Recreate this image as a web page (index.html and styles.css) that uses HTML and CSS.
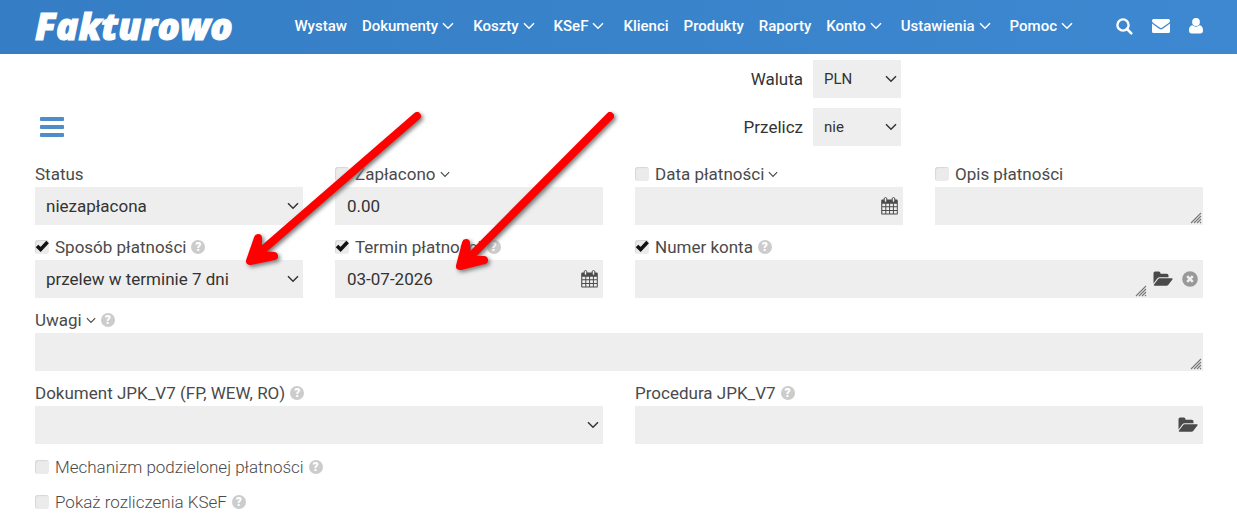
FILE: index.html
```html
<!DOCTYPE html>
<html lang="pl">
<head>
<meta charset="utf-8">
<title>Fakturowo</title>
<link rel="stylesheet" href="styles.css">
</head>
<body>
<svg class="sprite" aria-hidden="true">
  <symbol id="chev" viewBox="0 0 12 8"><path d="M1 1.2 6 6.2l5-5" fill="none" stroke="currentColor" stroke-width="1.5"/></symbol>
  <symbol id="chev-thin" viewBox="0 0 12 8"><path d="M1 1.2 6 6.2l5-5" fill="none" stroke="currentColor" stroke-width="1.4"/></symbol>
  <symbol id="tick" viewBox="0 0 14 14"><path d="M2 6 5.6 9.4 12.6 2" fill="none" stroke="#111" stroke-width="3.6"/></symbol>
  <symbol id="calendar" viewBox="0 0 17 18"><path fill="currentColor" fill-rule="evenodd" d="M1.4 2.6h14.2a1.2 1.2 0 0 1 1.2 1.2v12.6a1.2 1.2 0 0 1-1.2 1.2H1.4a1.2 1.2 0 0 1-1.2-1.2V3.8a1.2 1.2 0 0 1 1.2-1.2zM1.3 6.8v2.5h3v-2.5zm4 0v2.5h2.8v-2.5zm3.8 0v2.5h2.8v-2.5zm3.8 0v2.5h2.9v-2.5zM1.3 10.2v2.8h3v-2.8zm4 0v2.8h2.8v-2.8zm3.8 0v2.8h2.8v-2.8zm3.8 0v2.8h2.9v-2.8zM1.3 13.9v2.6h3v-2.6zm4 0v2.6h2.8v-2.6zm3.8 0v2.6h2.8v-2.6zm3.8 0v2.6h2.9v-2.6z"/><rect x="3.2" y=".6" width="2.6" height="4.6" rx="1.2" fill="#eee" stroke="currentColor"/><rect x="11.2" y=".6" width="2.6" height="4.6" rx="1.2" fill="#eee" stroke="currentColor"/></symbol>
  <symbol id="folder" viewBox="0 0 20 16"><path fill="currentColor" d="M.5 12.5V2.2A1.7 1.7 0 0 1 2.2.5h3.6a1.7 1.7 0 0 1 1.7 1.7v.5h6.300a1.7 1.7 0 0 1 1.7 1.7v1.900H6.800a3.500 3.500 0 0 0-2.600 1.300zM6.500 7.300h12.300c.8 0 1.100.6.6 1.200l-4 5.300c-.5.7-1.200 1-2 1H1.600c-.9 0-1.100-.5-.6-1.200l4-5.300c.4-.7.9-1 1.500-1z"/></symbol>
  <symbol id="grip" viewBox="0 0 12 12"><path d="M1 11 11 1M4 11l7-7M7 11l4-4M10 11l1-1" fill="none" stroke="#777" stroke-width="1.1"/></symbol>
</svg>

<header class="topbar">
  <a class="logo" href="#">Fakturowo</a>
  <nav class="nav">
    <a href="#">Wystaw</a>
    <a class="has-menu" href="#">Dokumenty<svg><use href="#chev"/></svg></a>
    <a class="has-menu" href="#">Koszty<svg><use href="#chev"/></svg></a>
    <a class="has-menu" href="#">KSeF<svg><use href="#chev"/></svg></a>
    <a href="#">Klienci</a>
    <a href="#">Produkty</a>
    <a href="#">Raporty</a>
    <a class="has-menu" href="#">Konto<svg><use href="#chev"/></svg></a>
    <a class="has-menu" href="#">Ustawienia<svg><use href="#chev"/></svg></a>
    <a class="has-menu" href="#">Pomoc<svg><use href="#chev"/></svg></a>
  </nav>
  <div class="tools">
    <button type="button" aria-label="Szukaj"><svg width="17" height="18" viewBox="0 0 17 18"><circle cx="7" cy="8" r="5.6" fill="none" stroke="#fff" stroke-width="2.4"/><path d="m11 12 4.300 4.300" stroke="#fff" stroke-width="2.600" stroke-linecap="round"/></svg></button>
    <button type="button" aria-label="Wiadomości"><svg width="18" height="14" viewBox="0 0 18 14"><path fill="#fff" d="M1.500 0h15A1.500 1.500 0 0 1 18 1.500v.3c0 .9-.6 1.700-1.300 2.200L11 8c-1 .7-1.500 1-2 1s-1-.3-2-1L1.300 4C.7 3.500 0 2.600 0 1.800v-.3A1.500 1.500 0 0 1 1.500 0z"/><path fill="#fff" d="M0 4.600 6.400 9.200c1 .7 1.800 1.200 2.600 1.200s1.600-.5 2.600-1.200L18 4.600v7.900a1.500 1.500 0 0 1-1.500 1.500h-15A1.500 1.500 0 0 1 0 12.500z"/></svg></button>
    <button type="button" aria-label="Profil"><svg width="14" height="16" viewBox="0 0 14 16"><circle cx="7" cy="4" r="3.900" fill="#fff"/><path fill="#fff" d="M3.500 7.200a5 5 0 0 0 7 0c2.600.2 3.500 2.400 3.500 5.300 0 2-1 3-2.600 3H2.600C1 15.500 0 14.500 0 12.500c0-2.900.9-5.100 3.500-5.300z"/></svg></button>
  </div>
</header>

<main class="page">
  <form>
    <div class="grid head">
      <button class="burger" type="button" aria-label="Menu"><i></i><i></i><i></i></button>
      <div class="currency">
        <label for="waluta">Waluta</label>
        <div class="control"><select id="waluta"><option>PLN</option></select><svg class="arrow"><use href="#chev"/></svg></div>
        <label for="przelicz">Przelicz</label>
        <div class="control"><select id="przelicz"><option>nie</option></select><svg class="arrow"><use href="#chev"/></svg></div>
      </div>
    </div>

    <div class="grid fields">
      <div class="field">
        <div class="caption"><label for="status">Status</label></div>
        <div class="control"><select id="status"><option>niezapłacona</option></select><svg class="arrow"><use href="#chev"/></svg></div>
      </div>
      <div class="field">
        <div class="caption"><span class="check"><input type="checkbox" id="c1"><svg><use href="#tick"/></svg></span><label for="c1">Zapłacono</label><svg class="more"><use href="#chev-thin"/></svg></div>
        <div class="control"><input type="text" value="0.00" aria-label="Zapłacono"></div>
      </div>
      <div class="field">
        <div class="caption"><span class="check"><input type="checkbox" id="c2"><svg><use href="#tick"/></svg></span><label for="c2">Data płatności</label><svg class="more"><use href="#chev-thin"/></svg></div>
        <div class="control"><input type="text" aria-label="Data płatności"><button class="date" type="button" aria-label="Kalendarz"><svg><use href="#calendar"/></svg></button></div>
      </div>
      <div class="field">
        <div class="caption"><span class="check"><input type="checkbox" id="c3"><svg><use href="#tick"/></svg></span><label for="c3">Opis płatności</label></div>
        <div class="control"><textarea aria-label="Opis płatności"></textarea><svg class="grip"><use href="#grip"/></svg></div>
      </div>

      <div class="field">
        <div class="caption"><span class="check"><input type="checkbox" id="c4" checked><svg><use href="#tick"/></svg></span><label for="c4">Sposób płatności</label><button class="help" type="button">?</button></div>
        <div class="control"><select aria-label="Sposób płatności"><option>przelew w terminie 7 dni</option></select><svg class="arrow"><use href="#chev"/></svg></div>
      </div>
      <div class="field">
        <div class="caption"><span class="check"><input type="checkbox" id="c5" checked><svg><use href="#tick"/></svg></span><label for="c5">Termin płatności</label><button class="help" type="button">?</button></div>
        <div class="control"><input type="text" value="03-07-2026" aria-label="Termin płatności"><button class="date" type="button" aria-label="Kalendarz"><svg><use href="#calendar"/></svg></button></div>
      </div>
      <div class="field half">
        <div class="caption"><span class="check"><input type="checkbox" id="c6" checked><svg><use href="#tick"/></svg></span><label for="c6">Numer konta</label><button class="help" type="button">?</button></div>
        <div class="account">
          <div class="control"><textarea aria-label="Numer konta"></textarea><svg class="grip"><use href="#grip"/></svg></div>
          <button class="folder" type="button" aria-label="Wybierz"><svg><use href="#folder"/></svg></button>
          <button class="clear" type="button" aria-label="Wyczyść"><svg width="16" height="16" viewBox="0 0 16 16"><circle cx="8" cy="8" r="7.800" fill="#999"/><path d="m5.200 5.200 5.600 5.600m0-5.600-5.600 5.600" stroke="#eee" stroke-width="2.600"/></svg></button>
        </div>
      </div>

      <div class="field full">
        <div class="caption"><label for="uwagi">Uwagi</label><svg class="more"><use href="#chev-thin"/></svg><button class="help" type="button">?</button></div>
        <div class="control"><textarea id="uwagi"></textarea><svg class="grip"><use href="#grip"/></svg></div>
      </div>

      <div class="field half">
        <div class="caption"><label for="jpk">Dokument JPK_V7 (FP, WEW, RO)</label><button class="help" type="button">?</button></div>
        <div class="control"><select id="jpk"><option></option></select><svg class="arrow"><use href="#chev"/></svg></div>
      </div>
      <div class="field half">
        <div class="caption"><label for="proc">Procedura JPK_V7</label><button class="help" type="button">?</button></div>
        <div class="account">
          <div class="control"><input type="text" id="proc"></div>
          <button class="folder" type="button" aria-label="Wybierz"><svg><use href="#folder"/></svg></button>
        </div>
      </div>
    </div>

    <div class="options">
      <div class="caption"><span class="check"><input type="checkbox" id="c7"><svg><use href="#tick"/></svg></span><label for="c7">Mechanizm podzielonej płatności</label><button class="help" type="button">?</button></div>
      <div class="caption"><span class="check"><input type="checkbox" id="c8"><svg><use href="#tick"/></svg></span><label for="c8">Pokaż rozliczenia KSeF</label><button class="help" type="button">?</button></div>
    </div>
  </form>

  <svg class="pointers" width="640" height="290" viewBox="0 0 640 290" aria-hidden="true">
    <g fill="none" stroke="#f00" stroke-width="8" stroke-linecap="round" stroke-linejoin="round">
      <path d="M417 116 251 260"/>
      <path fill="#f00" d="m258 238-8 23 24-5-16-1z"/>
      <path d="M610 116 462 265"/>
      <path fill="#f00" d="m466 243-6 23 24-6-17 0z"/>
    </g>
  </svg>
</main>
</body>
</html>
```
FILE: styles.css
```css
* { box-sizing: border-box; }

body {
  margin: 0;
  background: #fff;
  color: #4a4a4a;
  font: 17px/20px Roboto, "Noto Sans", sans-serif;
}

.sprite { position: absolute; width: 0; height: 0; }

button {
  display: flex;
  padding: 0;
  border: 0;
  background: none;
  color: inherit;
  font: inherit;
}

.topbar {
  display: flex;
  align-items: center;
  height: 54px;
  padding: 0 34px 2px 35px;
  background: linear-gradient(90deg, #357ec6, #3d88d0);
}

.topbar a { color: #fff; text-decoration: none; }

.topbar .logo {
  font: italic 800 37px/48px "Open Sans", sans-serif;
  -webkit-text-stroke: 1px #fff;
}

.nav {
  display: flex;
  gap: 15px;
  margin-left: auto;
  font-size: 15px;
  font-weight: 500;
  white-space: nowrap;
}

.has-menu { display: flex; align-items: center; gap: 4px; margin-right: 4px; }
.has-menu svg { width: 12px; height: 8px; }

.tools { display: flex; align-items: center; gap: 19px; margin-left: 39px; }

.page { padding: 6px 34px 12px 35px; }

.grid {
  display: grid;
  grid-template-columns: repeat(4, minmax(0, 1fr));
  column-gap: 32px;
}

.burger {
  flex-direction: column;
  align-self: end;
  gap: 4px;
  width: 24px;
  margin: 0 5px 9px;
}

.burger i { width: 24px; height: 4px; border-radius: 1px; background: #4f8dc9; }

.currency {
  display: grid;
  grid-column: 3;
  grid-template-columns: auto 88px;
  align-items: center;
  justify-self: end;
  gap: 10px;
  margin-right: 2px;
  color: #333;
  text-align: right;
}

.fields { row-gap: 12px; margin-top: 18px; }
.half { grid-column: span 2; }
.full { grid-column: span 4; }

.caption { display: flex; align-items: center; height: 20px; margin-bottom: 3px; white-space: nowrap; }

.check { display: grid; width: 14px; height: 14px; margin-right: 6px; }
.check > * { grid-area: 1 / 1; width: 14px; height: 14px; margin: 0; }
.check svg { visibility: hidden; pointer-events: none; }
.check input:checked + svg { visibility: visible; }

.check input {
  appearance: none;
  border-radius: 3px;
  background: #ebebeb;
  box-shadow: inset 1px 1px 1px #d8d8d8;
}

.more { width: 10px; height: 7px; margin-left: 4px; }

.help {
  justify-content: center;
  width: 14px;
  height: 14px;
  margin-left: 5px;
  border-radius: 50%;
  background: #ccc;
  color: #fff;
  font-size: 12px;
  font-weight: 900;
  line-height: 15px;
}

.control { position: relative; flex: 1; height: 38px; }

.control input,
.control select,
.control textarea {
  display: block;
  width: 100%;
  height: 38px;
  margin: 0;
  padding: 0 12px;
  border: 0;
  border-radius: 0;
  background: #eee;
  color: #333;
  font-family: inherit;
  font-size: 17px;
  line-height: 20px;
  appearance: none;
  resize: none;
}

.control select { padding: 0 11px; }
.currency .control select { font-size: 15px; }

.arrow { position: absolute; top: 15px; right: 4px; width: 12px; height: 8px; color: #333; pointer-events: none; }
.grip { position: absolute; right: 1px; bottom: 1px; width: 12px; height: 12px; }
.date { position: absolute; top: 10px; right: 5px; }
.date svg { width: 17px; height: 18px; }

.account { display: flex; align-items: center; gap: 9px; padding-right: 5px; background: #eee; }
.account .control { margin-right: -4px; }
.folder svg { width: 20px; height: 16px; }

.options { display: grid; gap: 12px; margin-top: 13px; font-weight: 300; }

.pointers {
  position: absolute;
  top: 0;
  left: 0;
  filter: drop-shadow(2px 2px 2px #777);
  pointer-events: none;
}
```
